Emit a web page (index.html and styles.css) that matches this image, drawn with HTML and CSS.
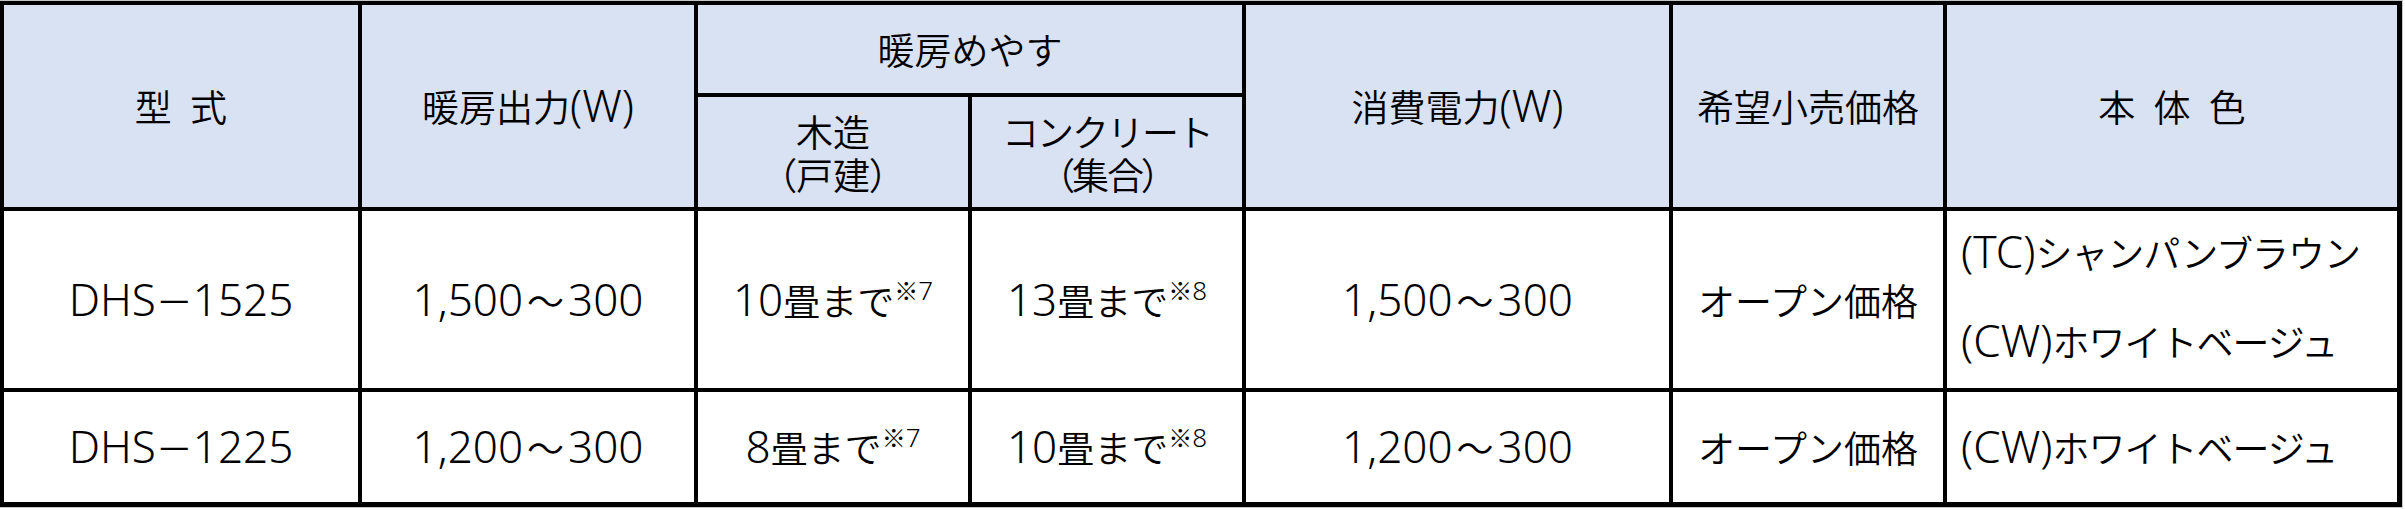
FILE: index.html
```html
<!DOCTYPE html>
<html lang="ja">
<head>
<meta charset="utf-8">
<title>仕様表</title>
<link rel="stylesheet" href="styles.css">
</head>
<body>
<div class="spec">
  <div class="cell head c-model"><p class="t">型 式</p></div>
  <div class="cell head c-out"><p class="t">暖房出力<span class="l">(W)</span></p></div>
  <div class="cell head c-guide"><p class="t">暖房めやす</p></div>
  <div class="cell head sub c-wood"><p class="t">木造<br><span class="p">（戸建）</span></p></div>
  <div class="cell head sub c-conc"><p class="t">コンクリート<br><span class="p">（集合）</span></p></div>
  <div class="cell head c-pow"><p class="t">消費電力<span class="l">(W)</span></p></div>
  <div class="cell head c-price"><p class="t">希望小売価格</p></div>
  <div class="cell head c-color"><p class="t">本 体 色</p></div>

  <div class="cell"><p class="t"><span class="l">DHS</span>－<span class="l">1525</span></p></div>
  <div class="cell"><p class="t"><span class="l">1,500</span><span class="w">～</span><span class="l">300</span></p></div>
  <div class="cell"><p class="t"><span class="l">10</span>畳まで<sup class="n">※<span class="nl">7</span></sup></p></div>
  <div class="cell"><p class="t"><span class="l">13</span>畳まで<sup class="n">※<span class="nl">8</span></sup></p></div>
  <div class="cell"><p class="t"><span class="l">1,500</span><span class="w">～</span><span class="l">300</span></p></div>
  <div class="cell"><p class="t">オープン価格</p></div>
  <div class="cell colors">
    <p class="t"><span class="l">(TC)</span>シャンパンブラウン</p>
    <p class="t"><span class="l">(CW)</span>ホワイトベージュ</p>
  </div>

  <div class="cell"><p class="t"><span class="l">DHS</span>－<span class="l">1225</span></p></div>
  <div class="cell"><p class="t"><span class="l">1,200</span><span class="w">～</span><span class="l">300</span></p></div>
  <div class="cell"><p class="t"><span class="l">8</span>畳まで<sup class="n">※<span class="nl">7</span></sup></p></div>
  <div class="cell"><p class="t"><span class="l">10</span>畳まで<sup class="n">※<span class="nl">8</span></sup></p></div>
  <div class="cell"><p class="t"><span class="l">1,200</span><span class="w">～</span><span class="l">300</span></p></div>
  <div class="cell"><p class="t">オープン価格</p></div>
  <div class="cell colors single">
    <p class="t"><span class="l">(CW)</span>ホワイトベージュ</p>
  </div>
</div>
</body>
</html>
```
FILE: styles.css
```css
html, body {
  margin: 0;
  padding: 0;
  background: #fff;
}

.spec {
  display: grid;
  grid-template-columns: 354px 332px 270px 270px 423px 270px 450px;
  grid-template-rows: 88px 110px 177px 110px;
  gap: 4px;
  width: max-content;
  background: #000;
  padding: 4px 5px 5px 4px;
  border-top: 1px solid #c4c4c4;
  border-right: 1px solid #c4c4c4;
  border-bottom: 1px solid #c4c4c4;
  font-family: "Noto Sans CJK JP", "Noto Sans", sans-serif;
  font-size: 37px;
  font-weight: 350;
  color: #000;
}

.cell {
  display: flex;
  flex-direction: column;
  align-items: center;
  justify-content: center;
  text-align: center;
  background: #fff;
  white-space: nowrap;
}

.t {
  margin: 0;
  line-height: 44px;
  letter-spacing: 0;
}

.cell.head {
  background: #d9e2f3;
}

.c-model { grid-column: 1; grid-row: 1 / 3; word-spacing: 10px; }
.c-out { grid-column: 2; grid-row: 1 / 3; }
.c-guide { grid-column: 3 / 5; grid-row: 1; }
.c-wood { grid-column: 3; grid-row: 2; }
.c-conc { grid-column: 4; grid-row: 2; }
.c-pow { grid-column: 5; grid-row: 1 / 3; }
.c-price { grid-column: 6; grid-row: 1 / 3; }
.c-color { grid-column: 7; grid-row: 1 / 3; word-spacing: 10px; }

.sub {
  padding-top: 2px;
}

.sub .t {
  line-height: 43px;
}

.c-conc .t {
  letter-spacing: -2px;
}

.l {
  font-family: "Noto Sans", sans-serif;
  font-size: 44px;
  line-height: 0;
  letter-spacing: 0;
}

.w {
  padding: 0 4px;
}

.p {
  font-feature-settings: "palt" 1;
}

.n {
  font-size: 24px;
  line-height: 0;
  vertical-align: 16px;
  letter-spacing: 0;
}

.nl {
  font-family: "Noto Sans", sans-serif;
  font-size: 26px;
}

.colors {
  align-items: flex-start;
  padding-left: 14px;
  padding-bottom: 6px;
  gap: 45px;
}

.colors .t {
  letter-spacing: -1px;
}

.colors.single {
  padding-bottom: 0;
}
```
